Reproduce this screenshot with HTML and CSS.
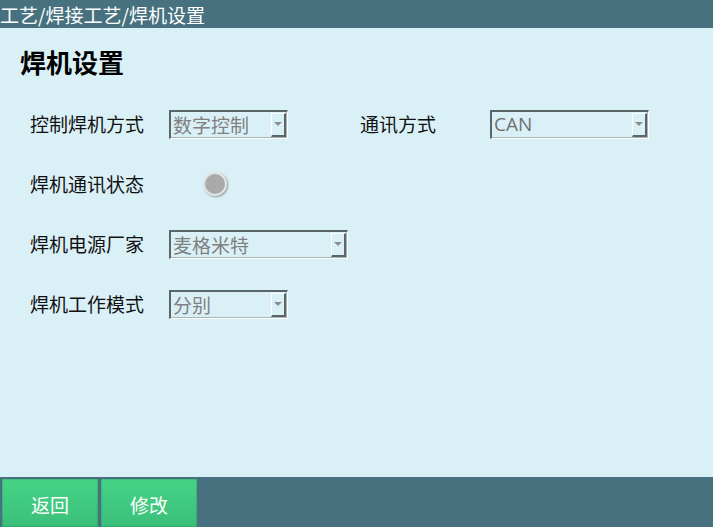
FILE: index.html
```html
<!DOCTYPE html>
<html lang="zh">
<head>
<meta charset="utf-8">
<link rel="stylesheet" href="styles.css">
</head>
<body>
<div class="app">
  <div class="topbar">工艺/焊接工艺/焊机设置</div>
  <div class="content">
    <h1 class="title">焊机设置</h1>
    <div class="row">
      <div class="label">控制焊机方式</div>
      <div class="select w118"><span class="val">数字控制</span><span class="btn"><i class="tri"></i></span></div>
      <div class="label label2">通讯方式</div>
      <div class="select w158"><span class="val latin">CAN</span><span class="btn"><i class="tri"></i></span></div>
    </div>
    <div class="row">
      <div class="label">焊机通讯状态</div>
      <div class="led-wrap"><span class="led"></span></div>
    </div>
    <div class="row">
      <div class="label">焊机电源厂家</div>
      <div class="select w178"><span class="val">麦格米特</span><span class="btn"><i class="tri"></i></span></div>
    </div>
    <div class="row">
      <div class="label">焊机工作模式</div>
      <div class="select w118"><span class="val">分别</span><span class="btn"><i class="tri"></i></span></div>
    </div>
  </div>
  <div class="footer">
    <button class="fbtn">返回</button>
    <button class="fbtn">修改</button>
  </div>
</div>
</body>
</html>
```
FILE: styles.css
```css
html, body {
  margin: 0;
  padding: 0;
}
body {
  font-family: "Noto Sans CJK SC", "Noto Sans", sans-serif;
  background: #daf0f7;
}
.app {
  width: 713px;
  height: 527px;
  display: flex;
  flex-direction: column;
  overflow: hidden;
}
.topbar {
  height: 28px;
  flex: none;
  background: #47717f;
  color: #ffffff;
  font-size: 19px;
  line-height: 30px;
  padding-left: 0;
  white-space: nowrap;
}
.content {
  flex: 1;
  background: #daf0f7;
  padding: 0 0 0 20px;
}
.title {
  margin: 14px 0 0 0;
  font-size: 26px;
  font-weight: bold;
  line-height: 40px;
  color: #000;
}
.row {
  display: flex;
  align-items: center;
  height: 30px;
  padding-left: 10px;
}
.title + .row {
  margin-top: 27px;
}
.row + .row {
  margin-top: 30px;
}
.label {
  width: 139px;
  font-size: 19px;
  color: #111;
  white-space: nowrap;
  line-height: 30px;
}
.label2 {
  margin-left: 72px;
  width: 130px;
}
.select {
  box-sizing: border-box;
  height: 29px;
  display: flex;
  align-items: stretch;
  border-top: 2px solid #5b666b;
  border-left: 2px solid #5b666b;
  border-right: 1px solid #ffffff;
  border-bottom: 1px solid #ffffff;
  box-shadow: inset -1px -1px 0 #a9b5b9;
  background: #daf0f7;
}
.w118 { width: 119px; }
.w158 { width: 159px; }
.w178 { width: 179px; }
.val {
  flex: 1;
  font-size: 19px;
  line-height: 25px;
  color: #808080;
  padding-left: 2px;
  white-space: nowrap;
  overflow: hidden;
}
.latin {
  font-family: "Open Sans", "Noto Sans", sans-serif;
  color: #707070;
}
.btn {
  box-sizing: border-box;
  width: 15px;
  margin: 1px 1px 1px 0;
  border-top: 1px solid #ffffff;
  border-left: 1px solid #ffffff;
  border-right: 2px solid #5b666b;
  border-bottom: 2px solid #5b666b;
  display: flex;
  align-items: center;
  justify-content: center;
}
.tri {
  display: block;
  width: 0;
  height: 0;
  border-left: 4px solid transparent;
  border-right: 4px solid transparent;
  border-top: 4px solid #8c8c8c;
}
.led-wrap {
  display: flex;
  align-items: center;
  padding-left: 34px;
}
.led {
  display: block;
  width: 20px;
  height: 20px;
  border-radius: 50%;
  background: #aaaaaa;
  border: 2px solid #e4e4e4;
  box-shadow: 1px 1px 2px rgba(0,0,0,0.35);
}
.footer {
  height: 50px;
  flex: none;
  background: #47717f;
  display: flex;
  align-items: flex-end;
  gap: 3px;
  padding-left: 2px;
}
.fbtn {
  width: 96px;
  height: 48px;
  border: none;
  margin: 0;
  padding: 4px 0 0 0;
  background: linear-gradient(#46d487, #3bbf7a);
  box-shadow: inset 0 0 2px rgba(0,80,40,0.5);
  color: #ffffff;
  font-family: "Noto Sans CJK SC", "Noto Sans", sans-serif;
  font-size: 19px;
  line-height: 44px;
}
```
